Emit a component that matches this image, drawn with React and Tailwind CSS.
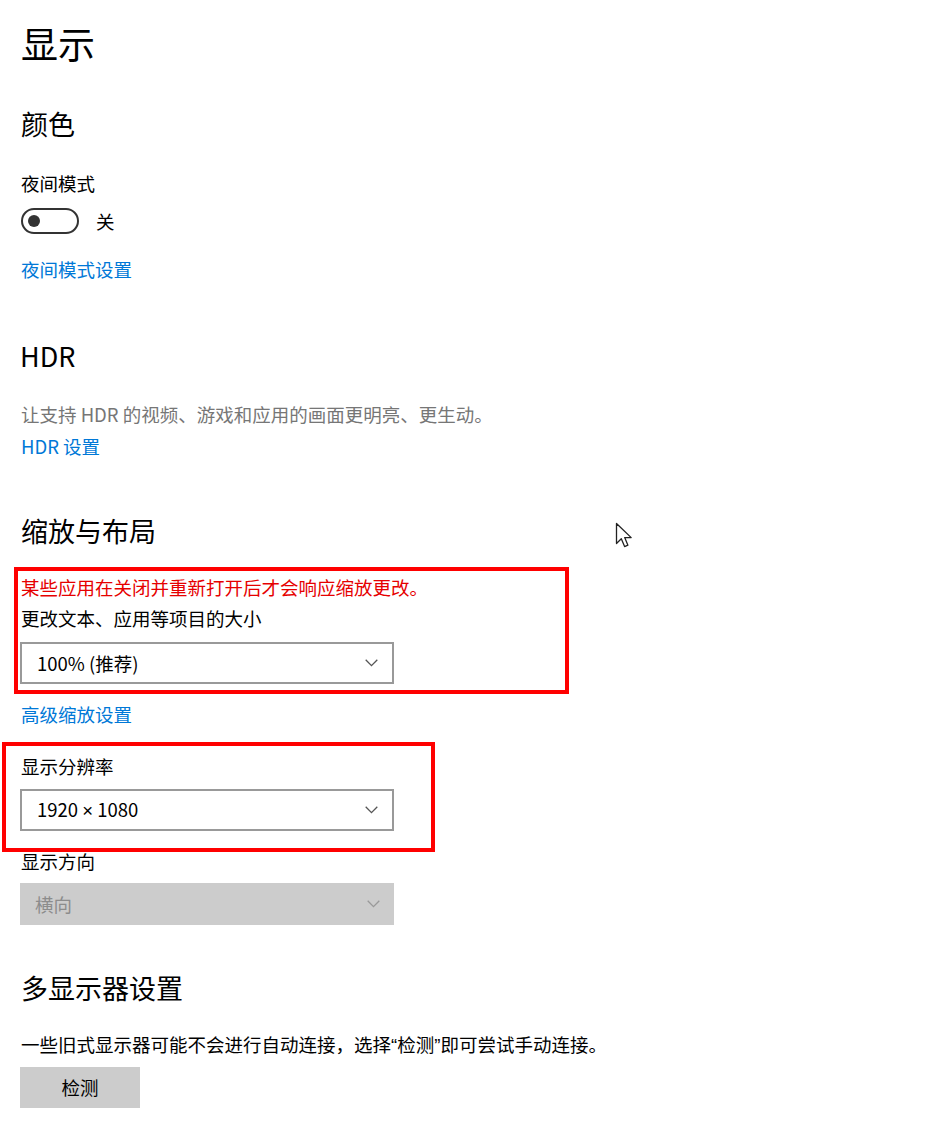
import React from 'react';

// Windows 10 "显示" settings page with red annotation boxes

const Chevron = ({ color = '#555' }) => (
  <svg width="13" height="8" viewBox="0 0 13 8" fill="none">
    <polyline points="0.7,0.8 6.5,6.6 12.3,0.8" stroke={color} strokeWidth="1.3" />
  </svg>
);

const Dropdown = ({ value, disabled = false }) => (
  <div
    className={`flex items-center justify-between w-[374px] h-[42px] pl-[15px] pr-[14px] text-[18.5px] leading-[26px] ${
      disabled ? 'bg-[#cccccc] text-[#8c8c8c]' : 'bg-white border-2 border-[#999999] text-black'
    }`}
  >
    <span>{value}</span>
    <Chevron color={disabled ? '#999' : '#555'} />
  </div>
);

const Heading = ({ children, className = '' }) => (
  <h2 className={`text-[27px] leading-[32px] font-normal text-black ${className}`}>{children}</h2>
);

const Label = ({ children, className = '' }) => (
  <p className={`text-[18.5px] leading-[26px] text-black ${className}`}>{children}</p>
);

const Link = ({ children, className = '' }) => (
  <a className={`block w-fit text-[18.5px] leading-[26px] text-[#0078d7] cursor-pointer ${className}`}>{children}</a>
);

// narrow Latin glyphs (quotes, ×) as the Segoe UI ones in the reference
const Narrow = ({ children }) => <span className="font-['Liberation_Sans',sans-serif]">{children}</span>;

const Cursor = () => (
  <svg className="absolute left-[615px] top-[522px]" width="18" height="27" viewBox="0 0 18 27">
    <path
      d="M1.5 1.5 L1.5 21.5 L6.3 16.8 L9.6 24.6 L12.9 23.2 L9.7 15.6 L16.2 15.6 Z"
      fill="white"
      stroke="#222"
      strokeWidth="1.3"
      strokeLinejoin="round"
    />
  </svg>
);

export default function App() {
  return (
    <div className="relative w-[928px] h-[1138px] bg-white pl-[21px] pt-[21px] font-['Noto_Sans_CJK_SC','Noto_Sans',sans-serif] text-black">
      <h1 className="text-[37px] leading-[44px] font-normal">显示</h1>

      {/* 颜色 */}
      <Heading className="mt-[43px]">颜色</Heading>
      <Label className="mt-[30px]">夜间模式</Label>
      <div className="mt-[12px] flex items-center gap-[17px]">
        <div className="w-[58px] h-[26px] rounded-full border-2 border-[#333] flex items-center pl-[5px]">
          <div className="w-[12px] h-[12px] rounded-full bg-[#333]" />
        </div>
        <span className="text-[18.5px] leading-[26px]">关</span>
      </div>
      <Link className="mt-[22px]">夜间模式设置</Link>

      {/* HDR */}
      <Heading className="mt-[58px] -ml-[1px]">HDR</Heading>
      <p className="mt-[29px] text-[18.5px] leading-[26px] text-[#767676]">
        让支持 HDR 的视频、游戏和应用的画面更明亮、更生动。
      </p>
      <Link className="mt-[6px]">HDR 设置</Link>

      {/* 缩放与布局 */}
      <Heading className="mt-[56px]">缩放与布局</Heading>
      <div className="relative mt-[27px]">
        <p className="text-[18.5px] leading-[26px] text-[#e60000]">某些应用在关闭并重新打开后才会响应缩放更改。</p>
        <Label className="mt-[5px]">更改文本、应用等项目的大小</Label>
        <div className="mt-[11px] -ml-[1px]">
          <Dropdown value="100% (推荐)" />
        </div>
        <div className="absolute z-10 -left-[7px] -top-[7px] -bottom-[10px] w-[555px] border-4 border-[#ff0000] pointer-events-none" />
      </div>
      <Link className="mt-[17px]">高级缩放设置</Link>

      <div className="relative mt-[26px]">
        <Label>显示分辨率</Label>
        <div className="mt-[10px] -ml-[1px]">
          <Dropdown value={<>1920 <Narrow>×</Narrow> 1080</>} />
        </div>
        <div className="absolute z-10 -left-[19px] -top-[11px] -bottom-[21px] w-[433px] border-4 border-[#ff0000] pointer-events-none" />
      </div>
      <Label className="mt-[17px]">显示方向</Label>
      <div className="mt-[9px] -ml-[1px]">
        <Dropdown value="横向" disabled />
      </div>

      {/* 多显示器设置 */}
      <Heading className="mt-[47px]">多显示器设置</Heading>
      <Label className="mt-[27px]">
        一些旧式显示器可能不会进行自动连接，选择<Narrow>“</Narrow>检测<Narrow>”</Narrow>即可尝试手动连接。
      </Label>
      <button className="mt-[8px] -ml-[1px] w-[120px] h-[41px] bg-[#cccccc] text-[18.5px] text-black">检测</button>

      <Cursor />
    </div>
  );
}
